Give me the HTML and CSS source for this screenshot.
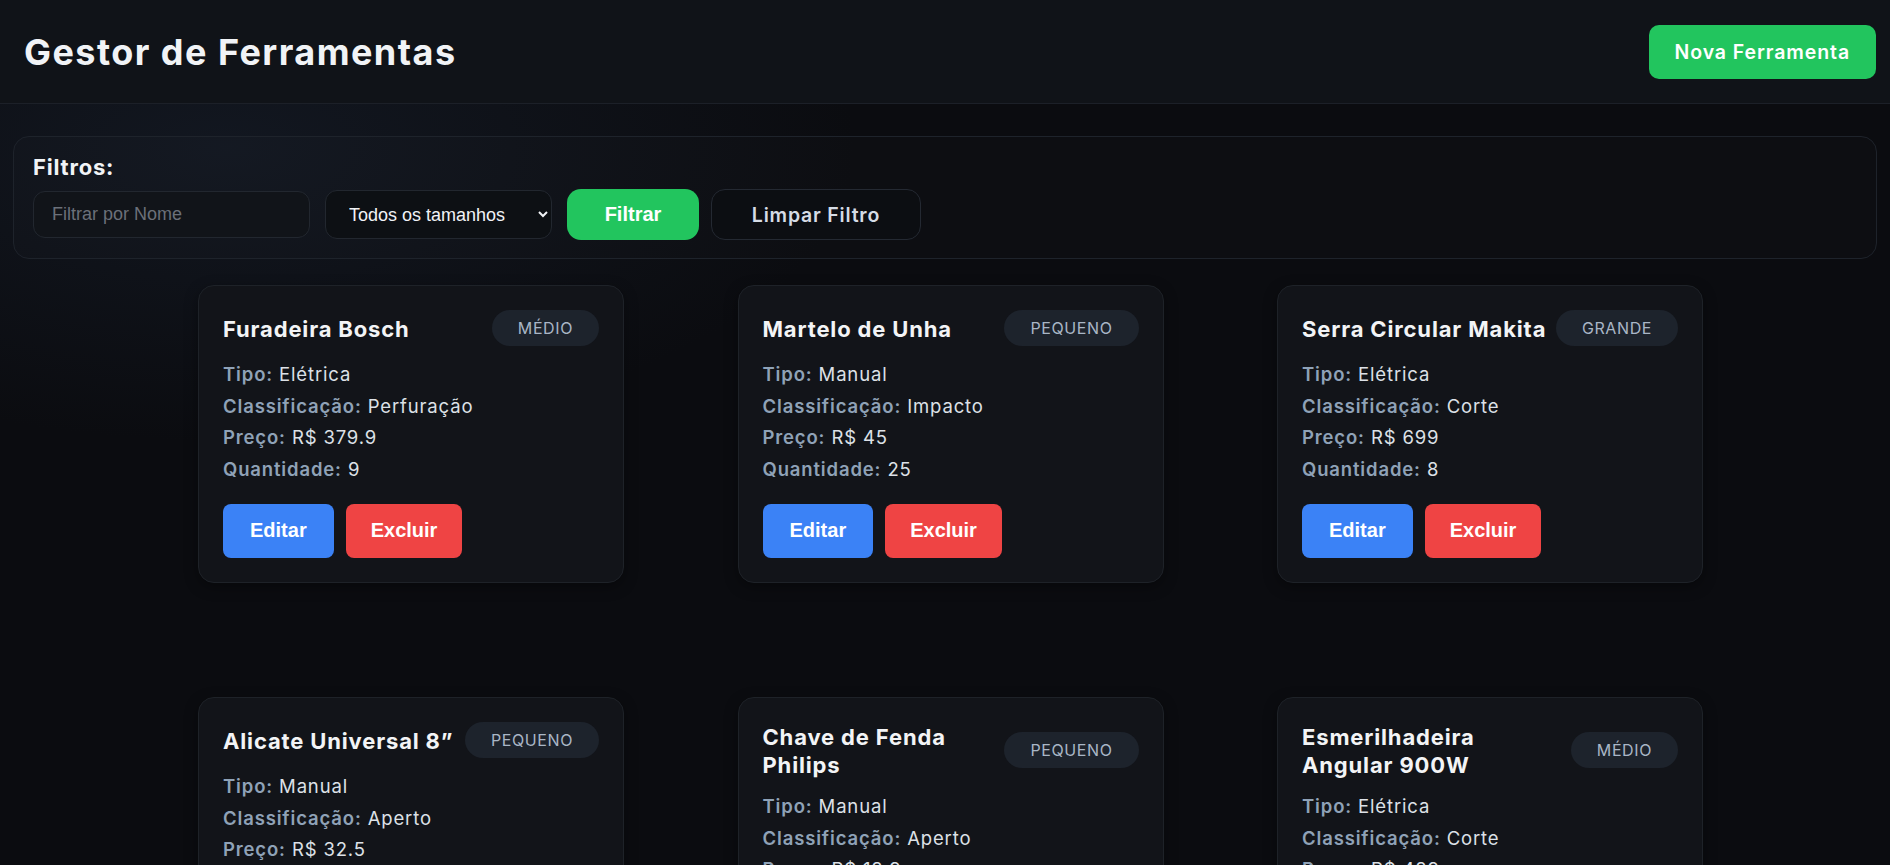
FILE: index.html
```html
<!DOCTYPE html>
<html lang="pt-BR">
<head>
<meta charset="utf-8">
<title>Gestor de Ferramentas</title>
<link rel="stylesheet" href="styles.css">
</head>
<body>
<header class="topbar">
  <h1 class="app-title">Gestor de Ferramentas</h1>
  <button class="btn-new">Nova Ferramenta</button>
</header>
<main class="content">
  <section class="filters">
    <h2 class="filters-title">Filtros:</h2>
    <div class="filters-row">
      <input class="filter-input" type="text" placeholder="Filtrar por Nome">
      <select class="filter-select"><option>Todos os tamanhos</option><option>Pequeno</option><option>Médio</option><option>Grande</option></select>
      <button class="btn-filter">Filtrar</button>
      <button class="btn-clear">Limpar Filtro</button>
    </div>
  </section>
  <section class="tool-grid">
    <article class="tool-card">
      <div class="card-head"><h3 class="card-title">Furadeira Bosch</h3><span class="size-badge">MÉDIO</span></div>
      <div class="card-details">
        <p><span class="label">Tipo:</span> Elétrica</p>
        <p><span class="label">Classificação:</span> Perfuração</p>
        <p><span class="label">Preço:</span> R$ 379.9</p>
        <p><span class="label">Quantidade:</span> 9</p>
      </div>
      <div class="card-actions"><button class="btn-edit">Editar</button><button class="btn-delete">Excluir</button></div>
    </article>
    <article class="tool-card">
      <div class="card-head"><h3 class="card-title">Martelo de Unha</h3><span class="size-badge">PEQUENO</span></div>
      <div class="card-details">
        <p><span class="label">Tipo:</span> Manual</p>
        <p><span class="label">Classificação:</span> Impacto</p>
        <p><span class="label">Preço:</span> R$ 45</p>
        <p><span class="label">Quantidade:</span> 25</p>
      </div>
      <div class="card-actions"><button class="btn-edit">Editar</button><button class="btn-delete">Excluir</button></div>
    </article>
    <article class="tool-card">
      <div class="card-head"><h3 class="card-title">Serra Circular Makita</h3><span class="size-badge">GRANDE</span></div>
      <div class="card-details">
        <p><span class="label">Tipo:</span> Elétrica</p>
        <p><span class="label">Classificação:</span> Corte</p>
        <p><span class="label">Preço:</span> R$ 699</p>
        <p><span class="label">Quantidade:</span> 8</p>
      </div>
      <div class="card-actions"><button class="btn-edit">Editar</button><button class="btn-delete">Excluir</button></div>
    </article>
    <article class="tool-card">
      <div class="card-head"><h3 class="card-title">Alicate Universal 8”</h3><span class="size-badge">PEQUENO</span></div>
      <div class="card-details">
        <p><span class="label">Tipo:</span> Manual</p>
        <p><span class="label">Classificação:</span> Aperto</p>
        <p><span class="label">Preço:</span> R$ 32.5</p>
        <p><span class="label">Quantidade:</span> 15</p>
      </div>
      <div class="card-actions"><button class="btn-edit">Editar</button><button class="btn-delete">Excluir</button></div>
    </article>
    <article class="tool-card">
      <div class="card-head"><h3 class="card-title">Chave de Fenda Philips</h3><span class="size-badge">PEQUENO</span></div>
      <div class="card-details">
        <p><span class="label">Tipo:</span> Manual</p>
        <p><span class="label">Classificação:</span> Aperto</p>
        <p><span class="label">Preço:</span> R$ 18.9</p>
        <p><span class="label">Quantidade:</span> 30</p>
      </div>
      <div class="card-actions"><button class="btn-edit">Editar</button><button class="btn-delete">Excluir</button></div>
    </article>
    <article class="tool-card">
      <div class="card-head"><h3 class="card-title">Esmerilhadeira Angular 900W</h3><span class="size-badge">MÉDIO</span></div>
      <div class="card-details">
        <p><span class="label">Tipo:</span> Elétrica</p>
        <p><span class="label">Classificação:</span> Corte</p>
        <p><span class="label">Preço:</span> R$ 489</p>
        <p><span class="label">Quantidade:</span> 6</p>
      </div>
      <div class="card-actions"><button class="btn-edit">Editar</button><button class="btn-delete">Excluir</button></div>
    </article>
  </section>
</main>
</body>
</html>
```
FILE: styles.css
```css
html {
  scrollbar-width: none;
}
html::-webkit-scrollbar {
  display: none;
}
* {
  box-sizing: border-box;
}
body {
  margin: 0;
  font-family: "Inter", "Noto Sans", sans-serif;
  color: #e5e7eb;
  background-color: #0b0c10;
  background-image: radial-gradient(ellipse 900px 420px at 12% 14%, rgba(30, 41, 59, 0.38), rgba(11, 12, 16, 0) 70%);
  background-repeat: no-repeat;
}

/* Header */
.topbar {
  height: 104px;
  display: flex;
  align-items: center;
  justify-content: space-between;
  padding: 0 14px 0 24px;
  background: #101318;
  border-bottom: 1px solid #1c2028;
}
.app-title {
  margin: 0;
  font-size: 36px;
  font-weight: 700;
  letter-spacing: 1.45px;
  color: #f1f3f6;
}
.btn-new {
  height: 54px;
  padding: 0 26px;
  border: none;
  border-radius: 10px;
  background: #22c55e;
  color: #ffffff;
  font-family: "Inter", sans-serif;
  font-size: 19.5px;
  font-weight: 600;
  letter-spacing: 0.9px;
}

/* Filters */
.content {
  padding: 0 13px 40px;
}
.filters {
  margin-top: 32px;
  height: 123px;
  padding: 17px 19px;
  border: 1px solid #1e232b;
  border-radius: 16px;
  background: rgba(255, 255, 255, 0.012);
}
.filters-title {
  margin: 0 0 9px;
  font-size: 22px;
  line-height: 26px;
  font-weight: 700;
  letter-spacing: 0.8px;
  color: #f1f3f6;
}
.filters-row {
  display: flex;
  align-items: center;
  gap: 15px;
}
.filter-input {
  width: 277px;
  height: 47px;
  padding: 0 18px;
  border: 1px solid #22272f;
  border-radius: 12px;
  background: #111419;
  color: #e5e7eb;
  font-family: "Liberation Sans", Arial, sans-serif;
  font-size: 18px;
  outline: none;
}
.filter-input::placeholder {
  color: #6b7079;
}
.filter-select {
  width: 227px;
  height: 49px;
  padding: 0 8px 0 19px;
  border: 1px solid #22272f;
  border-radius: 12px;
  background: #0d1014;
  color: #f1f3f6;
  color-scheme: dark;
  font-family: "Liberation Sans", Arial, sans-serif;
  font-size: 18px;
}
.btn-filter {
  width: 132px;
  height: 51px;
  border: none;
  border-radius: 14px;
  background: #22c55e;
  color: #ffffff;
  font-family: "Liberation Sans", Arial, sans-serif;
  font-size: 20px;
  font-weight: 700;
}
.btn-clear {
  margin-left: -3px;
  width: 210px;
  height: 51px;
  border: 1px solid #242932;
  border-radius: 14px;
  background: #0c0e12;
  color: #d6dce6;
  font-family: "Inter", sans-serif;
  font-size: 19.5px;
  font-weight: 600;
  letter-spacing: 0.8px;
}

/* Cards */
.tool-grid {
  margin-top: 26px;
  padding-left: 11px;
  display: grid;
  grid-template-columns: repeat(3, 426px);
  column-gap: 113.5px;
  row-gap: 114px;
  justify-content: center;
  align-items: start;
}
.tool-card {
  padding: 24px;
  border: 1px solid #1e2228;
  border-radius: 16px;
  background: #121419;
  box-shadow: 0 4px 14px rgba(0, 0, 0, 0.35);
}
.card-head {
  display: flex;
  align-items: center;
  justify-content: space-between;
  gap: 6px;
}
.card-title {
  margin: 0;
  font-size: 22px;
  line-height: 28px;
  font-weight: 700;
  letter-spacing: 0.85px;
  color: #f3f4f6;
  position: relative;
  top: 1px;
}
.size-badge {
  flex: none;
  height: 36px;
  display: flex;
  align-items: center;
  padding: 0 26px;
  border-radius: 18px;
  background: #1d232c;
  color: #a9b6c6;
  font-size: 16px;
  letter-spacing: 0.6px;
}
.card-details {
  margin-top: 13px;
}
.card-details p {
  margin: 0;
  font-size: 18.5px;
  line-height: 31.7px;
  color: #dde1e7;
  letter-spacing: 0.85px;
}
.label {
  font-weight: 600;
  color: #8fa2b7;
}
.card-actions {
  margin-top: 18px;
  display: flex;
  gap: 12px;
}
.btn-edit,
.btn-delete {
  height: 54px;
  padding: 0 27px;
  border: none;
  border-radius: 8px;
  color: #ffffff;
  font-family: "Liberation Sans", Arial, sans-serif;
  font-size: 20px;
  font-weight: 700;
}
.btn-edit {
  background: #3b82f6;
}
.btn-delete {
  padding: 0 25px;
  background: #ef4444;
}
```
